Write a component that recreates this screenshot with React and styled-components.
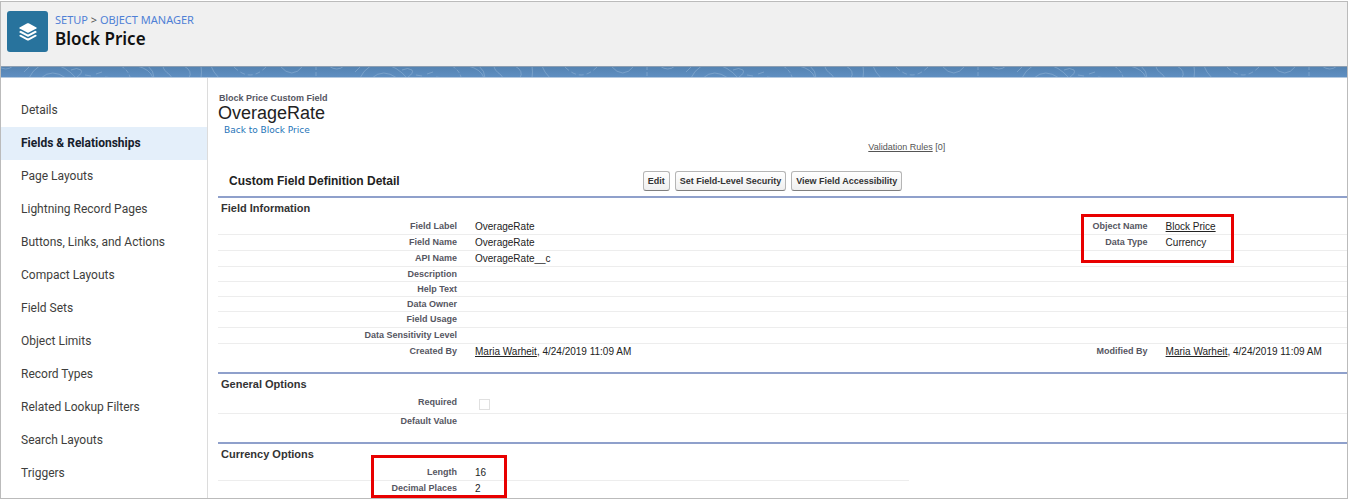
/** @format */

import React from 'react';
import styled, { createGlobalStyle } from 'styled-components';

const COLOR_LINK = '#2574b8';
const COLOR_LABEL = '#565662';
const COLOR_RULE = '#8fa0cb';
const COLOR_HIGHLIGHT = '#e80000';

const GlobalStyle = createGlobalStyle`
  *, *::before, *::after {
    box-sizing: border-box;
  }
  body {
    margin: 0;
    background: #fff;
    font-family: 'Liberation Sans', Arial, sans-serif;
    font-size: 10px;
    line-height: 12px;
    color: #222;
  }
`;

const Frame = styled.div`
  margin: 1px 1px 1px 0;
  border: 1px solid #bbb;
  background: #fff;
`;

const Header = styled.header`
  display: flex;
  align-items: flex-start;
  gap: 7px;
  padding: 9px 6px 14px;
  background: #f0f0f0;
  font-family: 'Noto Sans', sans-serif;
`;

const ObjectIcon = styled.div`
  display: flex;
  align-items: center;
  justify-content: center;
  width: 41px;
  height: 41px;
  border-radius: 3px;
  background: #28739d;
`;

const Breadcrumb = styled.nav`
  padding-top: 1px;
  font-size: 11px;
  line-height: 16px;
  color: #555;

  a {
    color: #4f80d6;
    text-decoration: none;
  }
`;

const ObjectTitle = styled.h1`
  margin: 0;
  font-size: 17px;
  line-height: 22px;
  font-weight: 600;
  color: #111;
`;

const Band = styled.svg`
  display: block;
  width: 100%;
  height: 12px;
`;

const Body = styled.div`
  display: grid;
  grid-template-columns: 207px 1fr;
`;

const Sidebar = styled.nav`
  padding: 16px 0 8px;
  border-right: 1px solid #dcdcdc;
`;

const SidebarLink = styled.a`
  display: block;
  padding-left: 20px;
  font-family: Roboto, sans-serif;
  font-size: 12px;
  line-height: 33px;
  font-weight: ${({ $active }) => ($active ? 700 : 400)};
  color: ${({ $active }) => ($active ? '#16202c' : '#3e3e3c')};
  background: ${({ $active }) => ($active ? '#e4effa' : 'transparent')};
  text-decoration: none;
`;

const Main = styled.main`
  padding: 14px 0 0 10px;
`;

const PageType = styled.div`
  padding-left: 1px;
  font-size: 9px;
  font-weight: bold;
  color: ${COLOR_LABEL};
`;

const PageName = styled.h2`
  margin: 0;
  font-size: 18px;
  line-height: 19px;
  font-weight: normal;
`;

const BackLink = styled.a`
  display: block;
  padding-top: 1px;
  margin-left: 6px;
  font-family: 'DejaVu Sans', sans-serif;
  font-size: 9px;
  color: ${COLOR_LINK};
  text-decoration: none;
`;

const RelatedLinks = styled.div`
  padding: 5px 0 18px 57.6%;
  font-size: 9px;
  color: #555;
`;

const TextLink = styled.a`
  color: inherit;
  text-decoration: underline;
`;

const DetailHeader = styled.div`
  display: grid;
  grid-template-columns: 37% 1fr;
  align-items: center;
  padding: 0 0 5px 11px;
`;

const DetailTitle = styled.h3`
  margin: 0;
  font-size: 12px;
  line-height: 20px;
`;

const ButtonRow = styled.div`
  display: flex;
  gap: 5px;
`;

const Button = styled.button`
  height: 20px;
  padding: 0 4px;
  border: 1px solid #b5b5b5;
  border-bottom-color: #7f7f7f;
  border-radius: 3px;
  background: linear-gradient(#fff, #efefef);
  font: bold 9px/12px 'Liberation Sans', Arial, sans-serif;
  color: #333;
`;

const Section = styled.section`
  padding-bottom: ${({ $last }) => ($last ? 0 : 12)}px;
  border-top: 2px solid ${COLOR_RULE};
`;

const SectionTitle = styled.h4`
  margin: 0;
  padding-left: 3px;
  font-size: 11px;
  line-height: 21px;
  color: #333;
`;

const FieldTable = styled.table`
  width: 100%;
  table-layout: fixed;
  border-collapse: separate;
  border-spacing: 0;
`;

const LabelColumn = styled.col`
  width: 239px;
`;

const ValueColumn = styled.col`
  width: 40%;
`;

const Row = styled.tr`
  height: ${({ $height }) => $height || 16}px;

  &:not(:last-child) > * {
    border-bottom: 1px solid #ededed;
  }
`;

const LabelCell = styled.th`
  position: relative;
  padding: 1px 0 0;
  font-size: 9px;
  text-align: right;
  vertical-align: top;
  color: ${COLOR_LABEL};
`;

const ValueCell = styled.td`
  padding: 2px 0 0 18px;
  vertical-align: top;
`;

const Checkbox = styled.input`
  appearance: none;
  display: block;
  width: 11px;
  height: 11px;
  margin: 2px 0 0 4px;
  border: 1px solid #e0e0e0;
  background: #fff;
`;

const Highlight = styled.span`
  position: absolute;
  z-index: 1;
  top: ${({ $top }) => $top}px;
  right: ${({ $right }) => $right}px;
  width: ${({ $width }) => $width}px;
  height: ${({ $height }) => $height}px;
  border: 3px solid ${COLOR_HIGHLIGHT};
  pointer-events: none;
`;

const MENU = [
  'Details',
  'Fields & Relationships',
  'Page Layouts',
  'Lightning Record Pages',
  'Buttons, Links, and Actions',
  'Compact Layouts',
  'Field Sets',
  'Object Limits',
  'Record Types',
  'Related Lookup Filters',
  'Search Layouts',
  'Triggers',
];

function UserStamp() {
  return (
    <>
      <TextLink href="#user">Maria Warheit</TextLink>, 4/24/2019 11:09 AM
    </>
  );
}

const FIELD_INFORMATION = [
  {
    cells: [
      { label: 'Field Label', value: 'OverageRate' },
      {
        label: 'Object Name',
        value: <TextLink href="#block-price">Block Price</TextLink>,
        highlight: { $top: -5, $right: -86, $width: 153, $height: 49 },
      },
    ],
  },
  {
    cells: [
      { label: 'Field Name', value: 'OverageRate' },
      { label: 'Data Type', value: 'Currency' },
    ],
  },
  { cells: [{ label: 'API Name', value: 'OverageRate__c' }, {}] },
  { height: 15, cells: [{ label: 'Description' }, {}] },
  { height: 15, cells: [{ label: 'Help Text' }, {}] },
  { height: 15, cells: [{ label: 'Data Owner' }, {}] },
  { cells: [{ label: 'Field Usage' }, {}] },
  { cells: [{ label: 'Data Sensitivity Level' }, {}] },
  {
    cells: [
      { label: 'Created By', value: <UserStamp /> },
      { label: 'Modified By', value: <UserStamp /> },
    ],
  },
];

const GENERAL_OPTIONS = [
  {
    height: 19,
    cells: [
      {
        label: <label htmlFor="required">Required</label>,
        value: <Checkbox id="required" type="checkbox" disabled />,
      },
      {},
    ],
  },
  { cells: [{ label: 'Default Value' }, {}] },
];

const CURRENCY_OPTIONS = [
  {
    cells: [
      {
        label: 'Length',
        value: '16',
        highlight: { $top: -10, $right: -50, $width: 136, $height: 43 },
      },
    ],
  },
  { cells: [{ label: 'Decimal Places', value: '2' }] },
];

function LayersIcon() {
  return (
    <svg width="18" height="18" viewBox="0 0 18 18" fill="#fff" aria-hidden="true">
      <path d="M8.3.3a1.6 1.6 0 0 1 1.4 0l7.7 4.1c.5.3.5.8 0 1.1L9.7 9.6a1.6 1.6 0 0 1-1.4 0L.6 5.5c-.5-.3-.5-.8 0-1.1z" />
      <path d="M.6 8.4l1.1-.6 6.2 3.3c.7.4 1.5.4 2.2 0l6.2-3.3 1.1.6c.5.3.5.7 0 1l-7.7 4.1a1.6 1.6 0 0 1-1.4 0L.6 9.4c-.5-.3-.5-.7 0-1z" />
      <path d="M.6 12.3l1.1-.6 6.2 3.3c.7.4 1.5.4 2.2 0l6.2-3.3 1.1.6c.5.3.5.7 0 1l-7.7 4.1a1.6 1.6 0 0 1-1.4 0L.6 13.3c-.5-.3-.5-.7 0-1z" />
    </svg>
  );
}

function ContourBand() {
  return (
    <Band aria-hidden="true">
      <defs>
        <linearGradient id="sky" x1="0" y1="0" x2="0" y2="1">
          <stop offset="0" stopColor="#5482b0" />
          <stop offset="1" stopColor="#6090c3" />
        </linearGradient>
        <pattern id="contours" x="23" y="0" width="331" height="12" patternUnits="userSpaceOnUse">
          <g fill="none" stroke="#9dbcdc" strokeOpacity="0.45" strokeWidth="1">
            <path d="M5 12Q12-3 28-2Q42 0 52 12" />
            <path d="M17 12Q28 2 42 12" />
            <path d="M0 6l6-6M47 4q6-3 10 0q2 3-4 7" />
            <path d="M61 9l6 1m5-2l6-2m3 5l8 1" />
            <path d="M97 0q7 4 9 11" strokeDasharray="4 2" />
            <path d="M113 0q13 3 16 12M124 0q6 5 6 12" />
            <path d="M139 0q0 4 7 9l2 3M160 0q9 5 5 12" />
            <path d="M177 0q1 6 0 12M187 0q2 6 8 12" />
            <path d="M210 1q16 16 32 0" strokeDasharray="5 3" />
            <path d="M256 0q12 14 23 0" />
            <path d="M292 0v12" strokeDasharray="4 2" />
            <path d="M305 0q8 6 15 0" />
          </g>
        </pattern>
      </defs>
      <rect width="100%" height="12" fill="url(#sky)" />
      <rect width="100%" height="12" fill="url(#contours)" />
      <rect width="100%" height="1" fill="#8c9eb2" />
      <rect y="11" width="100%" height="1" fill="#b4c9e0" />
    </Band>
  );
}

function FieldSection({ title, rows, last }) {
  return (
    <Section $last={last}>
      <SectionTitle>{title}</SectionTitle>
      <FieldTable>
        <colgroup>
          <LabelColumn />
          <ValueColumn />
          <LabelColumn />
          <col />
        </colgroup>
        <tbody>
          {rows.map(({ cells, height }, rowIndex) => (
            <Row key={rowIndex} $height={height}>
              {cells.map(({ label, value, highlight }, index) => (
                <React.Fragment key={index}>
                  <LabelCell as={label ? undefined : 'td'} scope={label ? 'row' : undefined}>
                    {label}
                    {highlight && <Highlight {...highlight} />}
                  </LabelCell>
                  <ValueCell>{value}</ValueCell>
                </React.Fragment>
              ))}
            </Row>
          ))}
        </tbody>
      </FieldTable>
    </Section>
  );
}

export default function App() {
  return (
    <>
      <GlobalStyle />
      <Frame>
        <Header>
          <ObjectIcon>
            <LayersIcon />
          </ObjectIcon>
          <div>
            <Breadcrumb>
              <a href="#setup">SETUP</a> &gt; <a href="#object-manager">OBJECT MANAGER</a>
            </Breadcrumb>
            <ObjectTitle>Block Price</ObjectTitle>
          </div>
        </Header>
        <ContourBand />
        <Body>
          <Sidebar>
            {MENU.map((item) => (
              <SidebarLink key={item} href="#menu" $active={item === 'Fields & Relationships'}>
                {item}
              </SidebarLink>
            ))}
          </Sidebar>
          <Main>
            <PageType>Block Price Custom Field</PageType>
            <PageName>OverageRate</PageName>
            <BackLink href="#block-price">Back to Block Price</BackLink>
            <RelatedLinks>
              <TextLink href="#validation-rules">Validation Rules</TextLink> [0]
            </RelatedLinks>
            <DetailHeader>
              <DetailTitle>Custom Field Definition Detail</DetailTitle>
              <ButtonRow>
                <Button type="button">Edit</Button>
                <Button type="button">Set Field-Level Security</Button>
                <Button type="button">View Field Accessibility</Button>
              </ButtonRow>
            </DetailHeader>
            <FieldSection title="Field Information" rows={FIELD_INFORMATION} />
            <FieldSection title="General Options" rows={GENERAL_OPTIONS} />
            <FieldSection title="Currency Options" rows={CURRENCY_OPTIONS} last />
          </Main>
        </Body>
      </Frame>
    </>
  );
}
